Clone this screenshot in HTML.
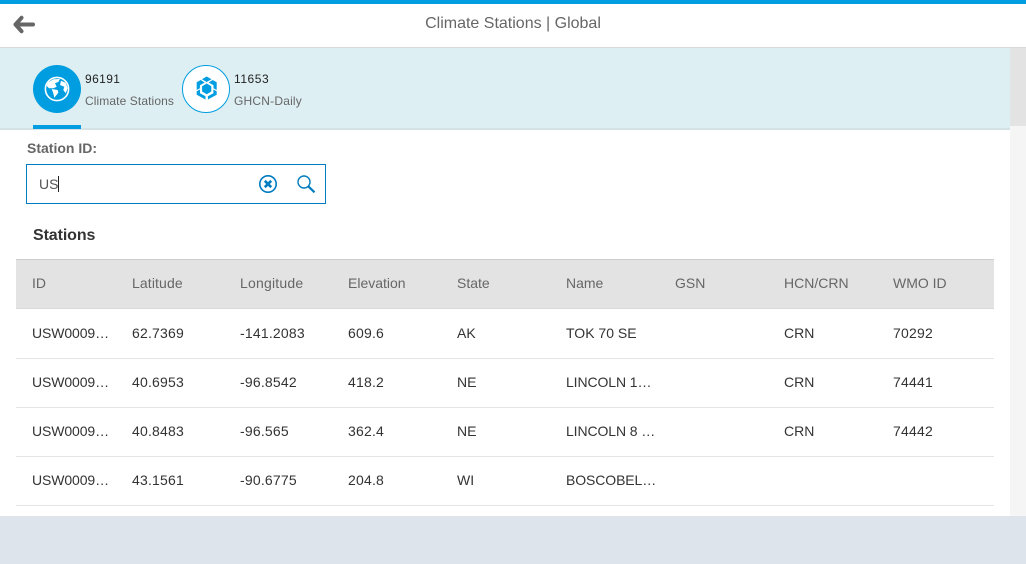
<!DOCTYPE html>
<html><head><meta charset="utf-8"><style>
html,body{margin:0;padding:0;width:1026px;height:564px;overflow:hidden;background:#fff}
body{position:relative;font-family:"Liberation Sans",sans-serif;font-size:14px;color:#333}
div,span,svg{position:absolute}
.t{white-space:nowrap;line-height:16px}
.c{color:#333;font-size:14px}
.n{letter-spacing:.2px}
.h{color:#666}
.line{left:16px;width:978px;height:1px;background:#e5e5e5}
</style></head><body>
<div style="left:0;top:0;width:1026px;height:4px;background:#009de0"></div>
<div style="left:0;top:47px;width:1026px;height:1px;background:#d9d9d9"></div>
<svg style="left:12px;top:15px" width="24" height="20" viewBox="0 0 24 20"><path d="M9.500 2.800 3.500 9.500 9.500 16.200M3.500 9.500H21" fill="none" stroke="#666" stroke-width="4" stroke-linecap="round" stroke-linejoin="round"/></svg>
<div class="t" style="left:0;top:15px;width:1026px;text-align:center;font-size:16px;line-height:18px;color:#666">Climate Stations | Global</div>

<div style="left:0;top:48px;width:1010px;height:80px;background:#ddeff3"></div>
<div style="left:0;top:128px;width:1010px;height:2px;background:#d5e2e6"></div>
<div style="left:1010px;top:48px;width:16px;height:78px;background:#e3e3e3"></div>
<div style="left:1010px;top:126px;width:16px;height:390px;background:#f5f5f5"></div>

<div style="left:33px;top:65px;width:48px;height:48px;border-radius:50%;background:#009de0"></div>
<svg style="left:44px;top:76px" width="26" height="26" viewBox="0 0 26 26"><circle cx="13" cy="13" r="11.600" fill="none" stroke="#fff" stroke-width="1.600"/><path d="M3.700 6.700 9.300 3.300 16 3 14.300 6 11 7.300 12.700 10.700 9.300 12.300 5 12.300 2.700 10ZM7.700 13 13.700 14 14.300 16.700 11.700 20 10.300 21.700 9.300 17.300ZM17 4.700 21.700 6.700 23.700 12.300 21.700 17.300 19.300 14 20.300 10.700 16 9Z" fill="#fff"/></svg>
<div class="t" style="left:85px;top:71px;font-size:12px;color:#222;letter-spacing:.4px">96191</div>
<div class="t" style="left:85px;top:93px;font-size:12px;color:#666;letter-spacing:.1px">Climate Stations</div>
<div style="left:33px;top:125px;width:48px;height:4px;background:#009de0"></div>

<div style="left:182px;top:65px;width:46px;height:46px;border-radius:50%;background:#fff;border:1px solid #009de0"></div>
<svg style="left:194px;top:76px" width="25" height="25" viewBox="0 0 25 25"><g fill="#009de0"><path d="M12.700 .5 17.500 3.300 12.700 6 7.900 3.300Z"/><path d="M18.700 4 22.700 6.300V14L19.500 12.200V9.300L14.700 6.500Z"/><path d="M6.700 4 2.700 6.300V14L5.900 12.200V9.300L10.700 6.500Z"/><path d="M12.700 7.500 17.300 10.200V15.500L12.700 18.200 8.100 15.500V10.200Z"/><path d="M2.700 15.300 6 13.500V17.200L11.500 20.300V23.500L2.700 18.700Z"/><path d="M22.700 15.300 19.400 13.500V17.200L13.900 20.300V23.500L22.700 18.700Z"/></g></svg>
<div class="t" style="left:234px;top:71px;font-size:12px;color:#222;letter-spacing:.55px">11653</div>
<div class="t" style="left:234px;top:93px;font-size:12px;color:#666;letter-spacing:.2px">GHCN-Daily</div>

<div class="t" style="left:27px;top:140px;font-size:14px;font-weight:bold;color:#666">Station ID:</div>
<div style="left:26px;top:164px;width:298px;height:38px;border:1px solid #007cc0;background:#fff"></div>
<div class="t" style="left:39px;top:176px;font-size:14px;color:#555">US</div>
<div style="left:58px;top:176px;width:1px;height:16px;background:#222"></div>
<svg style="left:258px;top:174px" width="20" height="20" viewBox="0 0 20 20"><circle cx="10" cy="10" r="8.200" fill="none" stroke="#007cc0" stroke-width="1.600"/><path d="M6.800 6.800 13.200 13.200M13.200 6.800 6.800 13.200" stroke="#007cc0" stroke-width="2.600"/></svg>
<svg style="left:296px;top:174px" width="20" height="20" viewBox="0 0 20 20"><circle cx="8" cy="8" r="6" fill="none" stroke="#007cc0" stroke-width="1.400"/><path d="M12.400 12.400 18.500 18.300" stroke="#007cc0" stroke-width="2.200"/></svg>

<div class="t" style="left:33px;top:227px;font-size:16px;font-weight:bold;line-height:18px;color:#333;letter-spacing:-.1px">Stations</div>

<div style="left:16px;top:259px;width:978px;height:1px;background:#ccc"></div>
<div style="left:16px;top:260px;width:978px;height:48px;background:#e3e3e3"></div>
<div class="line" style="top:308px;background:#d9d9d9"></div>
<div class="line" style="top:358px"></div>
<div class="line" style="top:407px"></div>
<div class="line" style="top:456px"></div>
<div class="line" style="top:505px"></div>

<div class="t h" style="left:32px;top:275px">ID</div>
<div class="t h" style="left:132px;top:275px;letter-spacing:.12px">Latitude</div>
<div class="t h" style="left:240px;top:275px;letter-spacing:.2px">Longitude</div>
<div class="t h" style="left:348px;top:275px">Elevation</div>
<div class="t h" style="left:457px;top:275px">State</div>
<div class="t h" style="left:566px;top:275px">Name</div>
<div class="t h" style="left:675px;top:275px">GSN</div>
<div class="t h" style="left:784px;top:275px">HCN/CRN</div>
<div class="t h" style="left:893px;top:275px">WMO ID</div>

<div class="t c" style="left:32px;top:325px;letter-spacing:-.1px">USW0009…</div>
<div class="t c n" style="left:132px;top:325px">62.7369</div>
<div class="t c n" style="left:240px;top:325px">-141.2083</div>
<div class="t c n" style="left:348px;top:325px">609.6</div>
<div class="t c" style="left:457px;top:325px">AK</div>
<div class="t c" style="left:566px;top:325px">TOK 70 SE</div>
<div class="t c" style="left:784px;top:325px">CRN</div>
<div class="t c n" style="left:893px;top:325px">70292</div>

<div class="t c" style="left:32px;top:374px;letter-spacing:-.1px">USW0009…</div>
<div class="t c n" style="left:132px;top:374px">40.6953</div>
<div class="t c n" style="left:240px;top:374px">-96.8542</div>
<div class="t c n" style="left:348px;top:374px">418.2</div>
<div class="t c" style="left:457px;top:374px">NE</div>
<div class="t c" style="left:566px;top:374px;letter-spacing:-.1px">LINCOLN 1…</div>
<div class="t c" style="left:784px;top:374px">CRN</div>
<div class="t c n" style="left:893px;top:374px">74441</div>

<div class="t c" style="left:32px;top:423px;letter-spacing:-.1px">USW0009…</div>
<div class="t c n" style="left:132px;top:423px">40.8483</div>
<div class="t c n" style="left:240px;top:423px">-96.565</div>
<div class="t c n" style="left:348px;top:423px">362.4</div>
<div class="t c" style="left:457px;top:423px">NE</div>
<div class="t c" style="left:566px;top:423px;letter-spacing:-.1px">LINCOLN 8 …</div>
<div class="t c" style="left:784px;top:423px">CRN</div>
<div class="t c n" style="left:893px;top:423px">74442</div>

<div class="t c" style="left:32px;top:472px;letter-spacing:-.1px">USW0009…</div>
<div class="t c n" style="left:132px;top:472px">43.1561</div>
<div class="t c n" style="left:240px;top:472px">-90.6775</div>
<div class="t c n" style="left:348px;top:472px">204.8</div>
<div class="t c" style="left:457px;top:472px">WI</div>
<div class="t c" style="left:566px;top:472px;letter-spacing:-.1px">BOSCOBEL…</div>

<div style="left:0;top:516px;width:1026px;height:48px;background:#dde4ec"></div>
</body></html>
